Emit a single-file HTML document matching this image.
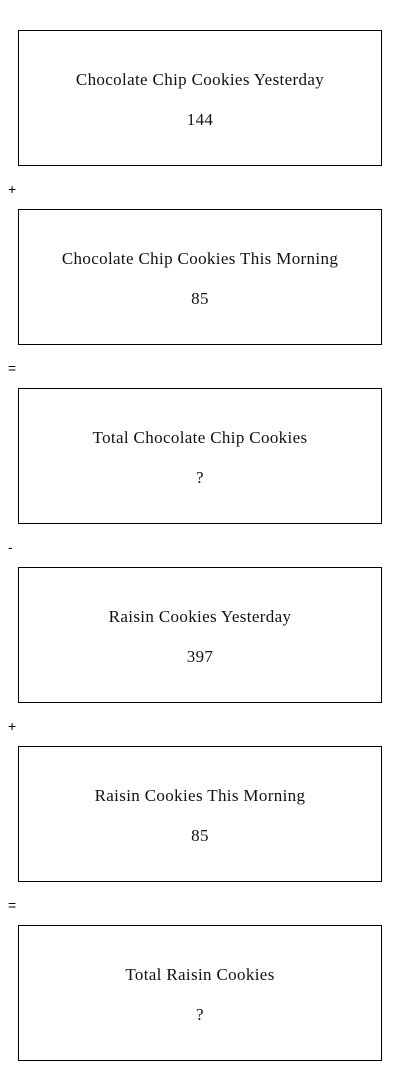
<!DOCTYPE html>
<html><head><meta charset="utf-8"><style>
html,body{margin:0;padding:0;background:#fff;width:400px;height:1071px;overflow:hidden}
.box{position:absolute;left:18px;width:362px;height:134px;border:1px solid #000;font-family:"Liberation Serif",serif;font-size:17px;letter-spacing:0.35px;color:#111;text-align:center}
.t{position:absolute;left:0;right:0;top:39px;line-height:20px}
.v{position:absolute;left:0;right:0;top:79px;line-height:20px}
.op{position:absolute;left:8px;font-family:"Liberation Sans",sans-serif;font-size:14px;line-height:16px;color:#000}
</style></head><body>
<div class="box" style="top:30px"><div class="t">Chocolate Chip Cookies Yesterday</div><div class="v">144</div></div>
<div class="op" style="top:181px">+</div>
<div class="box" style="top:209px"><div class="t">Chocolate Chip Cookies This Morning</div><div class="v">85</div></div>
<div class="op" style="top:360px">=</div>
<div class="box" style="top:388px"><div class="t">Total Chocolate Chip Cookies</div><div class="v">?</div></div>
<div class="op" style="top:539px">-</div>
<div class="box" style="top:567px"><div class="t">Raisin Cookies Yesterday</div><div class="v">397</div></div>
<div class="op" style="top:718px">+</div>
<div class="box" style="top:746px"><div class="t">Raisin Cookies This Morning</div><div class="v">85</div></div>
<div class="op" style="top:897px">=</div>
<div class="box" style="top:925px"><div class="t">Total Raisin Cookies</div><div class="v">?</div></div>
</body></html>
